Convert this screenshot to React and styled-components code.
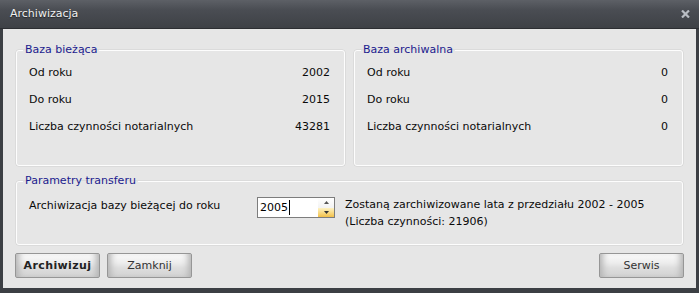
import React from "react";
import styled, { createGlobalStyle } from "styled-components";

const Global = createGlobalStyle`
  html, body { margin: 0; padding: 0; background: #3c3f44; }
  body { font-family: "DejaVu Sans", Verdana, sans-serif; font-size: 11px; color: #0a0a0a; }
  * { box-sizing: border-box; }
`;

const Window = styled.div`
  width: 699px;
  height: 293px;
  display: flex;
  flex-direction: column;
  background: #3c3f44;
`;

const TitleBar = styled.div`
  height: 29px;
  flex: none;
  display: flex;
  align-items: center;
  justify-content: space-between;
  padding: 0 9px 1px 10px;
  background: linear-gradient(to bottom, #5d6066 0%, #4a4d53 35%, #3e4146 100%);
  border-bottom: 1px solid #2c2e32;
`;

const Title = styled.span`
  color: #f0f0f0;
  font-size: 11px;
  text-shadow: 0 1px 1px rgba(0, 0, 0, 0.5);
`;

const CloseIcon = styled.svg`
  display: block;
  margin-top: 1px;
`;

const Body = styled.div`
  flex: 1;
  margin: 0 3px 5px 3px;
  background: #e6e6e6;
  padding: 14px 13px 9px 13px;
  display: flex;
  flex-direction: column;
`;

const TopGrid = styled.div`
  display: grid;
  grid-template-columns: 1fr 1fr;
  gap: 9px;
`;

const Group = styled.fieldset`
  margin: 0;
  min-width: 0;
  border: 1px solid #fdfdfd;
  border-radius: 3px;
  box-shadow: 0 0 0 0.5px #d0d0d0;
  padding: ${(p) => p.$pad};
`;

const Legend = styled.legend`
  color: #1b1b8e;
  font-size: 11px;
  line-height: 14px;
  padding: 0 2px;
  margin-left: -6px;
`;

const InfoRow = styled.div`
  height: 27px;
  display: flex;
  align-items: center;
  justify-content: space-between;
`;

const TransferRow = styled.div`
  display: flex;
  align-items: flex-start;
`;

const TransferLabel = styled.div`
  width: 228px;
  line-height: 20px;
  flex: none;
`;

const Spin = styled.div`
  width: 78px;
  height: 21px;
  margin-top: 1px;
  flex: none;
  display: flex;
  background: #ffffff;
  border: 1px solid #7d7d7d;
`;

const SpinText = styled.div`
  flex: 1;
  display: flex;
  align-items: center;
  padding-left: 2px;
  font-size: 11px;
  color: #000;
`;

const Caret = styled.span`
  display: inline-block;
  width: 1px;
  height: 15px;
  background: #000;
  margin-left: 1px;
`;

const SpinButtons = styled.div`
  width: 16px;
  display: flex;
  flex-direction: column;
`;

const SpinButton = styled.div`
  flex: 1;
  display: flex;
  align-items: center;
  justify-content: center;
  background: ${(p) =>
    p.$hot
      ? "linear-gradient(to bottom, #fdf2c4 0%, #f8d67a 60%, #f2c04a 100%)"
      : "linear-gradient(to bottom, #ffffff 0%, #f3f3f3 100%)"};
`;

const Description = styled.div`
  margin-left: 10px;
  line-height: 17px;
`;

const Footer = styled.div`
  display: flex;
  gap: 7px;
  margin: 8px -1px 0 -1px;
`;

const Spacer = styled.div`
  flex: 1;
`;

const Button = styled.button`
  width: 85px;
  height: 25px;
  padding: 0;
  font-family: "DejaVu Sans", Verdana, sans-serif;
  font-size: 11px;
  font-weight: ${(p) => (p.$primary ? 700 : 400)};
  letter-spacing: ${(p) => (p.$primary ? "0.4px" : "0")};
  color: ${(p) => (p.$primary ? "#222" : "#333")};
  border: 1px solid #969696;
  border-radius: 2px;
  background: linear-gradient(to bottom, #fbfbfb 0%, #ececec 40%, #dedede 60%, #d2d2d2 100%);
  box-shadow: inset 7px 0 6px -4px #b4b4b4, inset -7px 0 6px -4px #b4b4b4,
    inset 0 1px 0 #ffffff;
`;

const Arrow = ({ up }) => (
  <svg width="5" height="3" viewBox="0 0 5 3">
    <path d={up ? "M2.5 0 L5 3 L0 3 Z" : "M0 0 L5 0 L2.5 3 Z"} fill={up ? "#555" : "#333"} />
  </svg>
);

const InfoGroup = ({ title, rows }) => (
  <Group $pad="2px 14px 25px 12px">
    <Legend>{title}</Legend>
    {rows.map(([label, value]) => (
      <InfoRow key={label}>
        <span>{label}</span>
        <span>{value}</span>
      </InfoRow>
    ))}
  </Group>
);

export default function App() {
  return (
    <>
      <Global />
      <Window>
        <TitleBar>
          <Title>Archiwizacja</Title>
          <CloseIcon width="9" height="8" viewBox="0 0 9 8">
            <path d="M1 0.5 L8 7.5 M8 0.5 L1 7.5" stroke="#b9bdc3" strokeWidth="2.2" />
          </CloseIcon>
        </TitleBar>
        <Body>
          <TopGrid>
            <InfoGroup
              title="Baza bieżąca"
              rows={[
                ["Od roku", "2002"],
                ["Do roku", "2015"],
                ["Liczba czynności notarialnych", "43281"],
              ]}
            />
            <InfoGroup
              title="Baza archiwalna"
              rows={[
                ["Od roku", "0"],
                ["Do roku", "0"],
                ["Liczba czynności notarialnych", "0"],
              ]}
            />
          </TopGrid>
          <Group $pad="8px 14px 14px 12px" style={{ marginTop: 8 }}>
            <Legend>Parametry transferu</Legend>
            <TransferRow>
              <TransferLabel>Archiwizacja bazy bieżącej do roku</TransferLabel>
              <Spin>
                <SpinText>
                  2005
                  <Caret />
                </SpinText>
                <SpinButtons>
                  <SpinButton>
                    <Arrow up />
                  </SpinButton>
                  <SpinButton $hot>
                    <Arrow />
                  </SpinButton>
                </SpinButtons>
              </Spin>
              <Description>
                Zostaną zarchiwizowane lata z przedziału 2002 - 2005
                <br />
                (Liczba czynności: 21906)
              </Description>
            </TransferRow>
          </Group>
          <Footer>
            <Button $primary>Archiwizuj</Button>
            <Button>Zamknij</Button>
            <Spacer />
            <Button>Serwis</Button>
          </Footer>
        </Body>
      </Window>
    </>
  );
}
